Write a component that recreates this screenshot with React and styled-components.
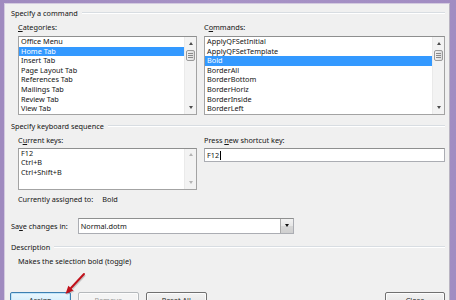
import React from "react";
import styled, { createGlobalStyle } from "styled-components";

const Global = createGlobalStyle`
  html, body {
    margin: 0;
    padding: 0;
    width: 456px;
    height: 300px;
    overflow: hidden;
    background: #a590c4;
  }
  body {
    font-family: "Noto Sans", "Open Sans", sans-serif;
    font-size: 7.3px;
    color: #141414;
  }
  * { box-sizing: border-box; }
`;

const Frame = styled.div`
  position: relative;
  width: 456px;
  height: 300px;
  padding: 3px 6px 0 4px;
  background: linear-gradient(90deg, #9f8abf 0%, #a893c6 50%, #a18cc2 100%);
`;

const Dialog = styled.div`
  height: 100%;
  background: #f0f0f0;
  border: 1px solid #d3cadf;
  border-bottom: none;
  border-right-color: #b9b4c2;
  padding: 4px 4px 0 6px;
  display: flex;
  flex-direction: column;
`;

const GroupHeader = styled.div`
  display: flex;
  align-items: center;
  gap: 4px;
  height: 11px;
  line-height: 11px;
  white-space: nowrap;
  margin-top: ${(p) => p.$mt || 0}px;
  &::after {
    content: "";
    flex: 1;
    height: 0;
    margin-top: -1px;
    border-top: 1px solid #d8dde2;
    border-bottom: 1px solid #ffffff;
  }
`;

const Indent = styled.div`
  padding-left: 7px;
`;

const Columns = styled.div`
  display: grid;
  grid-template-columns: 179px 1fr;
  column-gap: 7px;
`;

const Column = styled.div`
  display: flex;
  flex-direction: column;
  min-width: 0;
`;

const Label = styled.div`
  height: 11px;
  line-height: 11px;
  margin-top: 3px;
  white-space: nowrap;
`;

const Key = styled.u`
  text-decoration: underline;
  text-underline-offset: 1px;
`;

const ListBox = styled.div`
  display: flex;
  height: ${(p) => p.$h}px;
  margin-top: ${(p) => p.$mt}px;
  border: 1px solid #a3a3a3;
  border-top-color: #8e8f8f;
  background: #ffffff;
  overflow: hidden;
`;

const Items = styled.div`
  flex: 1;
  min-width: 0;
`;

const Item = styled.div`
  height: 9.6px;
  line-height: 9.6px;
  padding-left: 2px;
  white-space: nowrap;
  background: ${(p) => (p.$sel ? "#3399ff" : "transparent")};
  color: ${(p) => (p.$sel ? "#ffffff" : "inherit")};
`;

const ScrollBar = styled.div`
  width: 12px;
  flex: none;
  display: flex;
  flex-direction: column;
  background: #f3f3f3;
  border-left: 1px solid #eaeaea;
`;

const ScrollArrow = styled.div`
  height: 12px;
  display: flex;
  align-items: center;
  justify-content: center;
  &::before {
    content: "";
    width: 0;
    height: 0;
    border-left: 2.5px solid transparent;
    border-right: 2.5px solid transparent;
    ${(p) =>
      p.$down
        ? `border-top: 3px solid ${p.$off ? "#b4b4b4" : "#4d4d4d"};`
        : `border-bottom: 3px solid ${p.$off ? "#b4b4b4" : "#4d4d4d"};`}
  }
`;

const Spacer = styled.div`
  flex: 1;
`;

const Thumb = styled.div`
  height: 11px;
  margin: 1px 1px 0 0.5px;
  border: 1px solid #9a9a9a;
  border-radius: 2px;
  background: linear-gradient(90deg, #f1f1f1, #dcdcdc);
  display: flex;
  flex-direction: column;
  align-items: center;
  justify-content: center;
  gap: 1px;
  & > span {
    width: 5px;
    height: 1px;
    background: #8a8a8a;
  }
`;

const TextInput = styled.div`
  height: 14px;
  margin-top: 2.5px;
  border: 1px solid #abadb3;
  border-top-color: #8e8f8f;
  background: #ffffff;
  padding-left: 2px;
  line-height: 12px;
  display: flex;
  align-items: center;
`;

const Caret = styled.span`
  display: inline-block;
  width: 1px;
  height: 9px;
  background: #000;
  margin-left: 0.5px;
`;

const AssignedRow = styled.div`
  display: flex;
  gap: 9px;
  height: 11px;
  line-height: 11px;
  margin-top: 4px;
  padding-left: 7px;
`;

const SaveRow = styled.div`
  display: grid;
  grid-template-columns: 66.7px 216px;
  align-items: center;
  height: 16px;
  margin-top: 13px;
`;

const Select = styled.div`
  height: 16px;
  display: flex;
  border: 1px solid #abadb3;
  border-top-color: #8e8f8f;
  background: #ffffff;
`;

const SelectText = styled.div`
  flex: 1;
  padding-left: 2px;
  line-height: 14px;
`;

const SelectButton = styled.div`
  width: 13px;
  border-left: 1px solid #a9a9a9;
  background: linear-gradient(180deg, #f2f2f2 0%, #e6e6e6 50%, #d7d7d7 51%, #cfcfcf 100%);
  display: flex;
  align-items: center;
  justify-content: center;
  &::before {
    content: "";
    border-left: 2.5px solid transparent;
    border-right: 2.5px solid transparent;
    border-top: 3px solid #111;
  }
`;

const Description = styled.div`
  height: 11px;
  line-height: 11px;
  margin-top: 3px;
  padding-left: 7px;
`;

const ButtonRow = styled.div`
  display: flex;
  justify-content: space-between;
  margin-top: 24.7px;
  margin-left: -1px;
`;

const ButtonGroup = styled.div`
  display: flex;
  gap: 7.5px;
`;

const Button = styled.div`
  width: ${(p) => p.$w || 60.5}px;
  height: 16px;
  border-radius: 2px;
  text-align: center;
  line-height: 15px;
  border: 1px solid ${(p) => (p.$focus ? "#3c7fb1" : p.$off ? "#b5b9bc" : "#707070")};
  color: ${(p) => (p.$off ? "#9a9a9a" : "#1e1e1e")};
  background: ${(p) =>
    p.$off
      ? "#f4f4f4"
      : p.$focus
      ? "linear-gradient(180deg, #eaf6fd 0%, #d9f0fc 50%, #bee6fd 51%, #a7d9f5 100%)"
      : "linear-gradient(180deg, #f2f2f2 0%, #ebebeb 50%, #dddddd 51%, #cfcfcf 100%)"};
  box-shadow: ${(p) => (p.$focus ? "inset 0 0 0 1px #c0e4f9" : "inset 0 0 0 1px #fcfcfc")};
`;

const Overlay = styled.svg`
  position: absolute;
  left: 0;
  top: 0;
  pointer-events: none;
`;

const categories = [
  "Office Menu",
  "Home Tab",
  "Insert Tab",
  "Page Layout Tab",
  "References Tab",
  "Mailings Tab",
  "Review Tab",
  "View Tab",
];

const commands = [
  "ApplyQFSetInitial",
  "ApplyQFSetTemplate",
  "Bold",
  "BorderAll",
  "BorderBottom",
  "BorderHoriz",
  "BorderInside",
  "BorderLeft",
];

const keys = ["F12", "Ctrl+B", "Ctrl+Shift+B"];

function Scroll({ thumb, off }) {
  return (
    <ScrollBar>
      <ScrollArrow $off={off} />
      {thumb && (
        <Thumb>
          <span />
          <span />
          <span />
        </Thumb>
      )}
      <Spacer />
      <ScrollArrow $down $off={off} />
    </ScrollBar>
  );
}

export default function App() {
  return (
    <>
      <Global />
      <Frame>
        <Dialog>
          <GroupHeader>Specify a command</GroupHeader>
          <Indent>
            <Columns>
              <Column>
                <Label>
                  <Key>C</Key>ategories:
                </Label>
                <ListBox $h={78.8} $mt={3}>
                  <Items>
                    {categories.map((c) => (
                      <Item key={c} $sel={c === "Home Tab"}>
                        {c}
                      </Item>
                    ))}
                  </Items>
                  <Scroll thumb />
                </ListBox>
              </Column>
              <Column>
                <Label>
                  C<Key>o</Key>mmands:
                </Label>
                <ListBox $h={78.8} $mt={3}>
                  <Items>
                    {commands.map((c) => (
                      <Item key={c} $sel={c === "Bold"}>
                        {c}
                      </Item>
                    ))}
                  </Items>
                  <Scroll thumb />
                </ListBox>
              </Column>
            </Columns>
          </Indent>

          <GroupHeader $mt={6}>Specify keyboard sequence</GroupHeader>
          <Indent>
            <Columns>
              <Column>
                <Label>
                  C<Key>u</Key>rrent keys:
                </Label>
                <ListBox $h={42.2} $mt={2}>
                  <Items>
                    {keys.map((k) => (
                      <Item key={k}>{k}</Item>
                    ))}
                  </Items>
                  <Scroll off />
                </ListBox>
              </Column>
              <Column>
                <Label>
                  Press <Key>n</Key>ew shortcut key:
                </Label>
                <TextInput>
                  F12
                  <Caret />
                </TextInput>
              </Column>
            </Columns>
          </Indent>

          <AssignedRow>
            <span>Currently assigned to:</span>
            <span>Bold</span>
          </AssignedRow>

          <SaveRow>
            <span>
              Sa<Key>v</Key>e changes in:
            </span>
            <Select>
              <SelectText>Normal.dotm</SelectText>
              <SelectButton />
            </Select>
          </SaveRow>

          <GroupHeader $mt={8}>Description</GroupHeader>
          <Description>Makes the selection bold (toggle)</Description>

          <ButtonRow>
            <ButtonGroup>
              <Button $focus>
                <Key>A</Key>ssign
              </Button>
              <Button $off>
                <Key>R</Key>emove
              </Button>
              <Button>
                Re<Key>s</Key>et All
              </Button>
            </ButtonGroup>
            <Button $w={60}>Close</Button>
          </ButtonRow>
        </Dialog>

        <Overlay width="456" height="300" viewBox="0 0 456 300">
          <line x1="85" y1="275" x2="72.5" y2="288.5" stroke="#000" strokeOpacity="0.18" strokeWidth="2" />
          <polygon points="66.5,295 69.3,286.7 74.5,291.5" fill="#000" fillOpacity="0.18" />
          <line x1="84" y1="274" x2="71" y2="288" stroke="#c1121c" strokeWidth="2" strokeLinecap="round" />
          <polygon points="65.5,294 68.3,285.7 73.5,290.5" fill="#c1121c" />
        </Overlay>
      </Frame>
    </>
  );
}
